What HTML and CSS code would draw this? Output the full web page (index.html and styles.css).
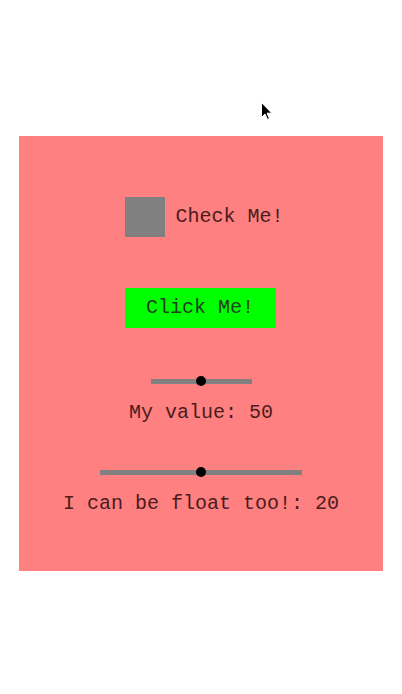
FILE: index.html
```html
<!DOCTYPE html>
<html>
<head>
<meta charset="utf-8">
<link rel="stylesheet" href="styles.css">
</head>
<body>
<div class="panel">
  <label class="check-row">
    <input type="checkbox" class="check-box">
    <span class="label">Check Me!</span>
  </label>
  <button class="btn">Click Me!</button>
  <input type="range" class="slider short" min="0" max="100" value="50">
  <div class="label value">My value: 50</div>
  <input type="range" class="slider long" min="0" max="40" value="20">
  <div class="label value">I can be float too!: 20</div>
</div>
<svg class="cursor" width="12" height="19" viewBox="0 0 12 19">
  <path d="M0.5 0.5 L0.5 15.5 L4 12 L6.5 17.5 L8.5 16.5 L6 11.2 L10.8 11.2 Z" fill="#000" stroke="#fff" stroke-width="1"/>
</svg>
</body>
</html>
```
FILE: styles.css
```css
html, body {
  margin: 0;
  padding: 0;
  background: #ffffff;
}
body {
  width: 402px;
  height: 694px;
  position: relative;
  overflow: hidden;
  padding-top: 136px;
  box-sizing: border-box;
}
.panel {
  margin-left: 19px;
  width: 364px;
  height: 435px;
  background: #ff8080;
  display: flex;
  flex-direction: column;
  align-items: center;
  padding-top: 61px;
  box-sizing: border-box;
}
.label {
  font-family: "Liberation Mono", "Courier New", monospace;
  font-size: 20px;
  line-height: 24px;
  color: #4a1c1c;
}
.check-row {
  display: flex;
  align-items: center;
  gap: 10px;
  height: 40px;
  margin-left: 7px;
}
.check-box {
  -webkit-appearance: none;
  appearance: none;
  width: 40px;
  height: 40px;
  margin: 0;
  background: #808080;
  border: none;
}
.btn {
  margin-top: 51px;
  margin-right: 2px;
  width: 151px;
  height: 40px;
  border: none;
  background: #00ff00;
  padding: 0;
  font-family: "Liberation Mono", "Courier New", monospace;
  font-size: 20px;
  line-height: 24px;
  color: #1f3f1f;
}
.slider {
  -webkit-appearance: none;
  appearance: none;
  background: transparent;
  height: 10px;
  margin: 0;
  padding: 0;
}
.slider.short {
  width: 101px;
  margin-top: 48px;
}
.slider.long {
  width: 202px;
  margin-top: 42px;
}
.slider::-webkit-slider-runnable-track {
  height: 5px;
  background: #808080;
  border: none;
}
.slider::-webkit-slider-thumb {
  -webkit-appearance: none;
  appearance: none;
  width: 10px;
  height: 10px;
  border-radius: 50%;
  background: #000;
  margin-top: -2.5px;
  border: none;
}
.value {
  margin-top: 15px;
}
.cursor {
  position: absolute;
  left: 261px;
  top: 102px;
}
```
